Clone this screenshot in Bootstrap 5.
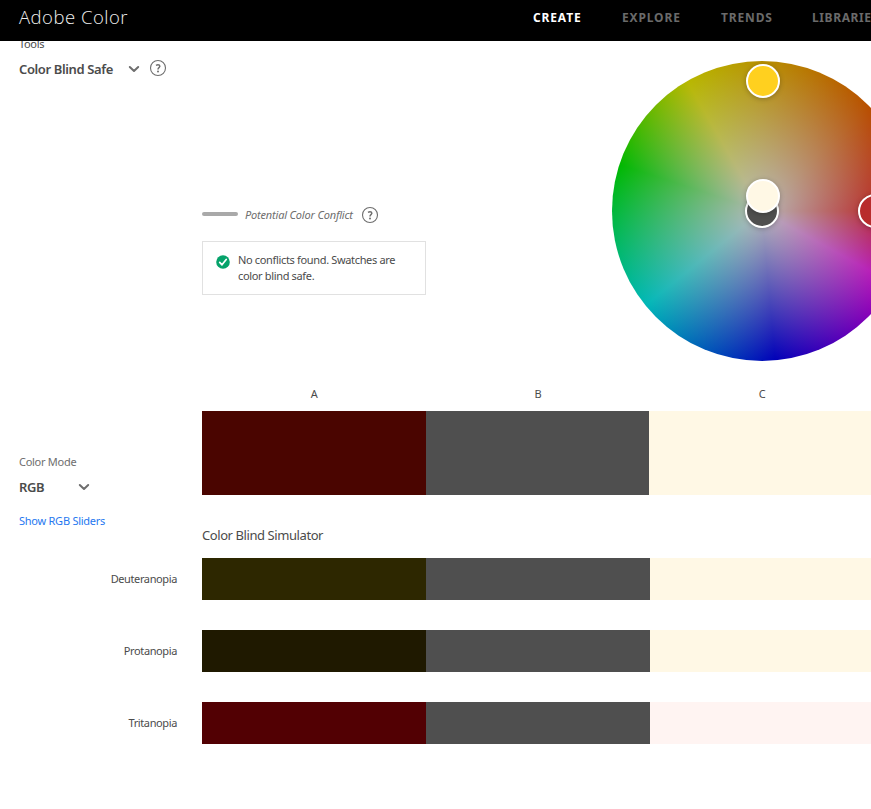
<!DOCTYPE html>
<html lang="en">
<head>
<meta charset="utf-8">
<meta name="viewport" content="width=device-width, initial-scale=1">
<title>Adobe Color</title>
<link href="https://cdn.jsdelivr.net/npm/bootstrap@5.3.0/dist/css/bootstrap.min.css" rel="stylesheet">
<style>
body{font-family:"Noto Sans","Open Sans",sans-serif;font-size:11px;line-height:16px;letter-spacing:-.34px;color:#4b4b4b;height:809px;overflow:hidden}
.topbar{height:41px;background:#000;padding-left:19px;overflow:hidden}
.brand{font-family:"Open Sans",sans-serif;font-weight:300;font-size:18.5px;letter-spacing:.5px;line-height:34px;color:#f0f0f0;width:514px}
.topnav{font-size:12px;font-weight:700;letter-spacing:.85px;line-height:35px}
.topnav a{color:#6a6a6a;text-decoration:none}
.topnav .nav-create{width:89px;color:#fff}
.topnav .nav-explore{width:99px}
.topnav .nav-trends{width:91px}
.topnav .nav-libraries{letter-spacing:.6px}
.page{padding-top:36px;overflow:hidden}
.upper{height:350px}
.side{width:202px;padding-left:19px}
.picker{font-size:13px;font-weight:600;letter-spacing:-.38px;line-height:18px}
.tool-name{width:109px}
.mode-name{width:59px}
.help{margin-left:9px;margin-top:-2px}
.conflict{width:410px;padding-top:170px}
.legend-line{width:36px;height:4px;border-radius:2px;background:#a9a9a9;margin:-2px 7px 0 0}
.potential{color:#6e6e6e;letter-spacing:-.18px}
.help-small{margin-left:8px}
.notice{width:224px;height:54px;border:1px solid #e1e1e1;margin-top:17px;padding:10px 13px}
.ok-icon{margin-top:3px}
.wheel{width:300px;height:300px;margin-top:25px;background:radial-gradient(circle closest-side,#b8b8b8 0,rgba(184,184,184,0) 100%),conic-gradient(#b89000 0deg,#b85000 45deg,#b80000 90deg,#b800b8 119deg,#0000b8 175deg,#00b8b8 231deg,#00b800 288deg,#b8b800 330deg,#b89000 360deg)}
.handle{position:absolute;width:34px;height:34px;border:2px solid #fff;border-radius:50%;box-shadow:0 1px 5px rgba(0,0,0,.25)}
.h-yellow{left:134px;top:3px;background:#ffd01f}
.h-gray{left:133px;top:133px;background:#4f4f4f}
.h-cream{left:134px;top:118px;background:#fff8e5}
.h-red{left:246px;top:133px;background:#b82c2c}
.letter-col{width:224px}
.swatches{height:84px;margin-top:9px}
.swatch{width:224px;height:84px}
.swatch.b{width:223px}
.mode{padding-top:43px}
.mode-title{color:#6e6e6e;letter-spacing:-.28px}
.link-row{height:34px;padding-top:18px;letter-spacing:-.25px}
.show-link{color:#2678f0;text-decoration:none}
.sim-title{font-size:13px;font-weight:400;letter-spacing:-.42px;line-height:18px;padding-left:202px;margin:-3px 0 14px}
.sim{margin-bottom:30px}
.sim .tone{width:224px;height:42px}
.sim-label{width:202px;padding-right:25px;letter-spacing:-.38px}
.dark-red{background:#4a0500}.mid-gray{background:#4f4f4f}.cream{background:#fff8e5}
.olive{background:#2d2700}.dark-olive{background:#1f1900}.maroon{background:#520003}.blush{background:#fff4f2}
</style>
<script src="https://cdn.jsdelivr.net/npm/bootstrap@5.3.0/dist/js/bootstrap.bundle.min.js"></script>
</head>
<body>
<header class="topbar fixed-top d-flex align-items-start">
  <div class="brand flex-shrink-0">Adobe Color</div>
  <nav class="topnav d-flex text-nowrap"><a class="nav-create flex-shrink-0" href="#">CREATE</a><a class="nav-explore flex-shrink-0" href="#">EXPLORE</a><a class="nav-trends flex-shrink-0" href="#">TRENDS</a><a class="nav-libraries flex-shrink-0" href="#">LIBRARIES</a></nav>
</header>
<main class="page">
  <section class="upper d-flex align-items-start">
    <div class="side flex-shrink-0">
      <div>Tools</div>
      <div class="picker d-flex align-items-center mt-2"><span class="tool-name text-nowrap">Color Blind Safe</span>
        <svg width="12" height="8" viewBox="0 0 12 8"><path d="M1.8 2L6 6l4.2-4" fill="none" stroke="#6e6e6e" stroke-width="2" stroke-linecap="round" stroke-linejoin="round"/></svg>
        <svg class="help" width="18" height="18" viewBox="0 0 18 18"><circle cx="9" cy="9" r="7.5" fill="none" stroke="#6e6e6e" stroke-width="1.1"/><path d="M7 6.4Q9 5.2 10.4 6.2Q11.4 7.2 10.2 8.4Q9 9.2 9 10.4" fill="none" stroke="#6e6e6e" stroke-width="1.5"/><circle cx="9" cy="12.4" r="1" fill="#6e6e6e"/></svg>
      </div>
    </div>
    <div class="conflict flex-shrink-0">
      <div class="d-flex align-items-center"><span class="legend-line"></span><em class="potential">Potential Color Conflict</em>
        <svg class="help-small" width="18" height="18" viewBox="0 0 18 18"><circle cx="9" cy="9" r="7.5" fill="none" stroke="#6e6e6e" stroke-width="1.1"/><path d="M7 6.4Q9 5.2 10.4 6.2Q11.4 7.2 10.2 8.4Q9 9.2 9 10.4" fill="none" stroke="#6e6e6e" stroke-width="1.5"/><circle cx="9" cy="12.4" r="1" fill="#6e6e6e"/></svg>
      </div>
      <div class="notice d-flex align-items-start">
        <svg class="ok-icon flex-shrink-0" width="14" height="14" viewBox="0 0 14 14"><circle cx="7" cy="7" r="6.8" fill="#06a36b"/><path d="M3.7 7.4l2.3 2.4 4.2-5.3" fill="none" stroke="#fff" stroke-width="1.7" stroke-linecap="round" stroke-linejoin="round"/></svg>
        <div class="ms-2 text-nowrap">No conflicts found. Swatches are<br>color blind safe.</div>
      </div>
    </div>
    <div class="wheel rounded-circle position-relative flex-shrink-0">
      <span class="handle h-yellow"></span><span class="handle h-gray"></span><span class="handle h-cream"></span><span class="handle h-red"></span>
    </div>
  </section>
  <section>
    <div class="d-flex text-center"><div class="side flex-shrink-0"></div><div class="letter-col flex-shrink-0">A</div><div class="letter-col flex-shrink-0">B</div><div class="letter-col flex-shrink-0">C</div></div>
    <div class="d-flex swatches">
      <div class="side mode flex-shrink-0">
        <div class="mode-title">Color Mode</div>
        <div class="picker d-flex align-items-center mt-2"><span class="mode-name">RGB</span><svg width="12" height="8" viewBox="0 0 12 8"><path d="M1.8 2L6 6l4.2-4" fill="none" stroke="#6e6e6e" stroke-width="2" stroke-linecap="round" stroke-linejoin="round"/></svg></div>
      </div>
      <div class="swatch dark-red flex-shrink-0"></div><div class="swatch b mid-gray flex-shrink-0"></div><div class="swatch cream flex-shrink-0"></div>
    </div>
    <div class="side link-row"><a class="show-link" href="#">Show RGB Sliders</a></div>
  </section>
  <section>
    <h2 class="sim-title">Color Blind Simulator</h2>
    <div class="sim d-flex align-items-center"><div class="sim-label text-end flex-shrink-0">Deuteranopia</div><div class="tone olive flex-shrink-0"></div><div class="tone mid-gray flex-shrink-0"></div><div class="tone cream flex-shrink-0"></div></div>
    <div class="sim d-flex align-items-center"><div class="sim-label text-end flex-shrink-0">Protanopia</div><div class="tone dark-olive flex-shrink-0"></div><div class="tone mid-gray flex-shrink-0"></div><div class="tone cream flex-shrink-0"></div></div>
    <div class="sim d-flex align-items-center"><div class="sim-label text-end flex-shrink-0">Tritanopia</div><div class="tone maroon flex-shrink-0"></div><div class="tone mid-gray flex-shrink-0"></div><div class="tone blush flex-shrink-0"></div></div>
  </section>
</main>
</body>
</html>
